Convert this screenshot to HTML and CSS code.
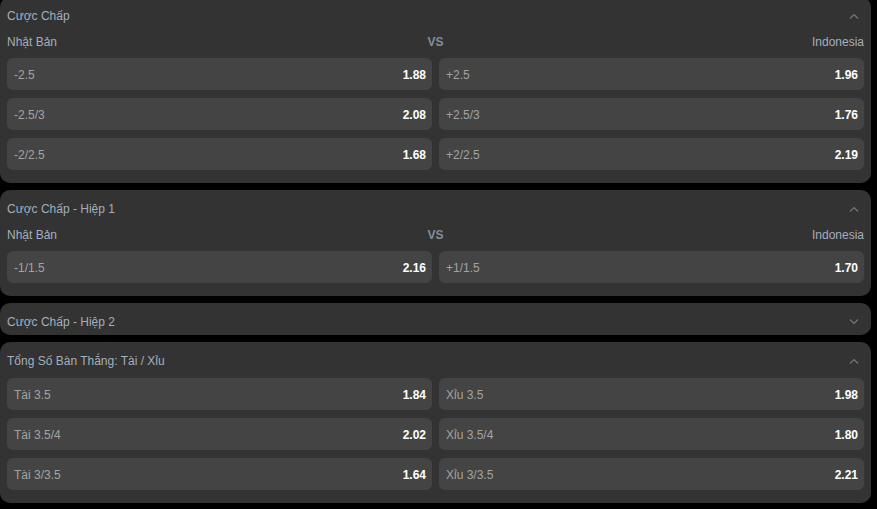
FILE: index.html
```html
<!DOCTYPE html>
<html lang="vi">
<head>
    <meta charset="UTF-8">
    <title>Cược Chấp</title>
    <link rel="stylesheet" href="styles.css">
</head>
<body>
    <div class="markets">
        <div class="panel">
            <div class="panel-head">
                <span class="title">Cược Chấp</span>
                <svg class="chev" width="10" height="6" viewBox="0 0 10 6"><path d="M1 5.5 L5 1.5 L9 5.5" fill="none" stroke="#777" stroke-width="1.2"/></svg>
            </div>
            <div class="panel-body">
                <div class="teams">
                    <span>Nhật Bản</span>
                    <span class="vs">VS</span>
                    <span class="away">Indonesia</span>
                </div>
                <div class="grid">
                    <div class="odd"><span class="lbl">-2.5</span><span class="val">1.88</span></div>
                    <div class="odd"><span class="lbl">+2.5</span><span class="val">1.96</span></div>
                    <div class="odd"><span class="lbl">-2.5/3</span><span class="val">2.08</span></div>
                    <div class="odd"><span class="lbl">+2.5/3</span><span class="val">1.76</span></div>
                    <div class="odd"><span class="lbl">-2/2.5</span><span class="val">1.68</span></div>
                    <div class="odd"><span class="lbl">+2/2.5</span><span class="val">2.19</span></div>
                </div>
            </div>
        </div>

        <div class="panel">
            <div class="panel-head">
                <span class="title">Cược Chấp - Hiệp 1</span>
                <svg class="chev" width="10" height="6" viewBox="0 0 10 6"><path d="M1 5.5 L5 1.5 L9 5.5" fill="none" stroke="#777" stroke-width="1.2"/></svg>
            </div>
            <div class="panel-body">
                <div class="teams">
                    <span>Nhật Bản</span>
                    <span class="vs">VS</span>
                    <span class="away">Indonesia</span>
                </div>
                <div class="grid">
                    <div class="odd"><span class="lbl">-1/1.5</span><span class="val">2.16</span></div>
                    <div class="odd"><span class="lbl">+1/1.5</span><span class="val">1.70</span></div>
                </div>
            </div>
        </div>

        <div class="panel">
            <div class="panel-head">
                <span class="title">Cược Chấp - Hiệp 2</span>
                <svg class="chev" width="10" height="6" viewBox="0 0 10 6"><path d="M1 0.5 L5 4.5 L9 0.5" fill="none" stroke="#777" stroke-width="1.2"/></svg>
            </div>
        </div>

        <div class="panel">
            <div class="panel-head">
                <span class="title">Tổng Số Bàn Thắng: Tài / Xỉu</span>
                <svg class="chev" width="10" height="6" viewBox="0 0 10 6"><path d="M1 5.5 L5 1.5 L9 5.5" fill="none" stroke="#777" stroke-width="1.2"/></svg>
            </div>
            <div class="panel-body">
                <div class="grid">
                    <div class="odd"><span class="lbl">Tài 3.5</span><span class="val">1.84</span></div>
                    <div class="odd"><span class="lbl">Xỉu 3.5</span><span class="val">1.98</span></div>
                    <div class="odd"><span class="lbl">Tài 3.5/4</span><span class="val">2.02</span></div>
                    <div class="odd"><span class="lbl">Xỉu 3.5/4</span><span class="val">1.80</span></div>
                    <div class="odd"><span class="lbl">Tài 3/3.5</span><span class="val">1.64</span></div>
                    <div class="odd"><span class="lbl">Xỉu 3/3.5</span><span class="val">2.21</span></div>
                </div>
            </div>
        </div>
    </div>
</body>
</html>
```

FILE: styles.css
```css
body {
    margin: 0;
    background-color: #000;
    font-family: "Liberation Sans", Arial, sans-serif;
    font-size: 12px;
    overflow: hidden;
}
.markets {
    width: 871px;
    margin-top: -3px;
    display: flex;
    flex-direction: column;
    gap: 7px;
}
.panel {
    background-color: #333;
    border-radius: 10px;
}
.panel-head {
    height: 32px;
    padding: 6px 12px 0 7px;
    display: flex;
    align-items: center;
    justify-content: space-between;
    box-sizing: border-box;
}
.title {
    color: #a4afba;
    line-height: 16px;
}
.chev {
    display: block;
    margin-top: -1px;
}
.panel-body {
    padding: 4px 7px 13px 7px;
}
.teams {
    display: grid;
    grid-template-columns: 1fr auto 1fr;
    line-height: 16px;
    color: #a4afba;
    padding-top: 1px;
    margin-bottom: 8px;
}
.vs {
    font-weight: bold;
    color: #838e99;
}
.away {
    text-align: right;
}
.grid {
    display: grid;
    grid-template-columns: 1fr 1fr;
    gap: 8px 7px;
}
.odd {
    height: 32px;
    background-color: #444;
    border-radius: 6px;
    display: flex;
    align-items: center;
    justify-content: space-between;
    padding: 1px 6px 0 7px;
    box-sizing: border-box;
}
.lbl {
    color: #a3a3a3;
}
.val {
    color: #fff;
    font-weight: bold;
}
```
